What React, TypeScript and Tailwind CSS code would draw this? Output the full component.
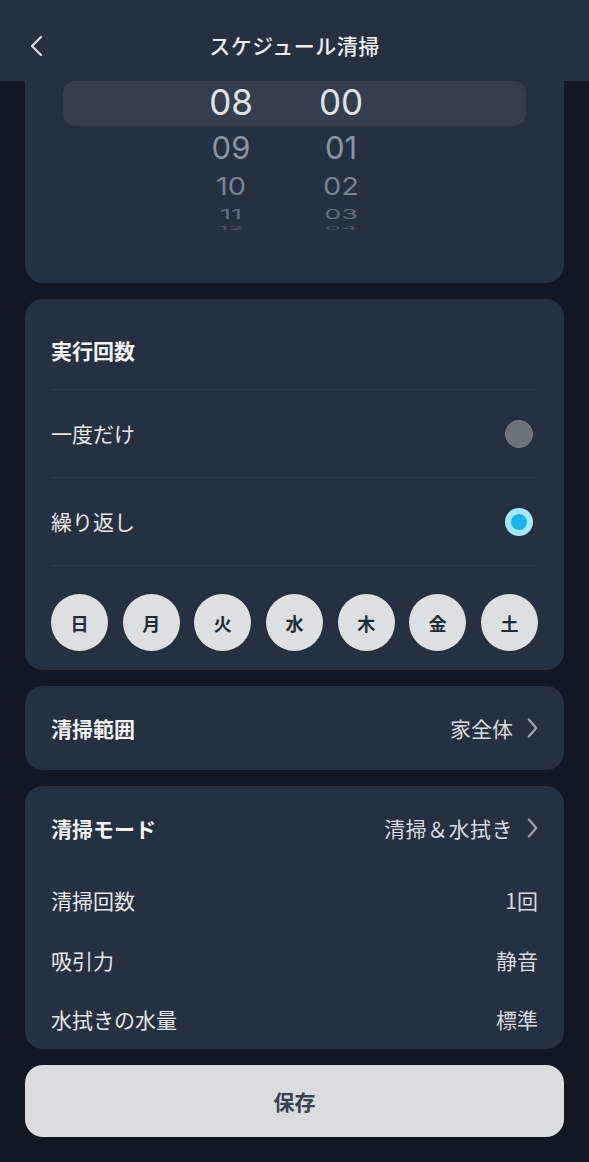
import React from "react";

const Chevron = ({ className = "" }: { className?: string }) => (
  <svg viewBox="0 0 10 19" className={className} fill="none" stroke="currentColor" strokeWidth="2.2" strokeLinecap="round" strokeLinejoin="round">
    <path d="M1.5 1.5 L8.5 9.5 L1.5 17.5" />
  </svg>
);

const days = ["日", "月", "火", "水", "木", "金", "土"];

export default function App() {
  return (
    <div className="w-[589px] min-h-[1162px] bg-[#111824] font-['Noto_Sans_CJK_JP','Noto_Sans',sans-serif] text-[#e3e6ea]">
      {/* Header */}
      <div className="h-[81px] bg-[#253041] grid grid-cols-[72px_1fr_72px] items-center pt-[10px]">
        <div className="flex justify-center">
          <svg viewBox="0 0 14 22" className="w-[14px] h-[22px] text-[#d5d9de]" fill="none" stroke="currentColor" strokeWidth="2.3" strokeLinecap="round" strokeLinejoin="round">
            <path d="M12 2 L3 11 L12 20" />
          </svg>
        </div>
        <div className="text-center text-[21px] font-medium leading-none text-[#eceef1] tracking-[0.5px]">スケジュール清掃</div>
        <div />
      </div>

      <div className="px-[25px] flex flex-col gap-4">
        {/* Time picker card */}
        <div className="h-[202px] bg-[#253041] rounded-b-[18px] px-[38px] font-['Inter',sans-serif]">
          <div className="h-[45px] bg-[#343e4c] rounded-[12px] flex items-center pl-[128px] gap-[30px] pb-[3px]">
            <div className="w-[80px] text-center text-[35px] leading-none text-[#dfe3e8]">08</div>
            <div className="w-[80px] text-center text-[35px] leading-none text-[#dfe3e8]">00</div>
          </div>
          <div className="h-[42px] flex items-center pl-[128px] gap-[30px] text-[31px] leading-none text-[#8a94a1]">
            <div className="w-[80px] text-center">09</div>
            <div className="w-[80px] text-center">01</div>
          </div>
          <div className="h-[36px] flex items-center pl-[128px] gap-[30px] text-[29px] leading-none text-[#7a8490] scale-y-[0.85]">
            <div className="w-[80px] text-center">10</div>
            <div className="w-[80px] text-center">02</div>
          </div>
          <div className="h-[20px] flex items-center pl-[128px] gap-[30px] text-[27px] leading-none text-[#66707c] scale-y-[0.5]">
            <div className="w-[80px] text-center">11</div>
            <div className="w-[80px] text-center">03</div>
          </div>
          <div className="h-[8px] flex items-center pl-[128px] gap-[30px] text-[26px] leading-none text-[#4d5765] scale-y-[0.2]">
            <div className="w-[80px] text-center">12</div>
            <div className="w-[80px] text-center">04</div>
          </div>
        </div>

        {/* 実行回数 */}
        <div className="bg-[#253041] rounded-[18px] px-[26px]">
          <div className="h-[90px] flex items-center pt-[12px] text-[21px] font-bold text-[#f0f2f4] leading-none">実行回数</div>
          <div className="h-px bg-[#323d4c]" />
          <div className="h-[87px] flex items-center justify-between">
            <span className="text-[21px] leading-none">一度だけ</span>
            <div className="w-[28px] h-[28px] rounded-full bg-[#6c727c] border border-[#7a8089] mr-[5px]" />
          </div>
          <div className="h-px bg-[#323d4c]" />
          <div className="h-[87px] flex items-center justify-between">
            <span className="text-[21px] leading-none">繰り返し</span>
            <div className="w-[28px] h-[28px] rounded-full bg-[#a6e9fc] flex items-center justify-center mr-[5px]">
              <div className="w-[16px] h-[16px] rounded-full bg-[#1cb3e9]" />
            </div>
          </div>
          <div className="h-px bg-[#323d4c]" />
          <div className="pt-[28px] pb-[19px] flex justify-between">
            {days.map((d) => (
              <div key={d} className="w-[57px] h-[57px] rounded-full bg-[#dcdfe3] flex items-center justify-center text-[18px] font-bold text-[#222b38] leading-none">
                {d}
              </div>
            ))}
          </div>
        </div>

        {/* 清掃範囲 */}
        <div className="h-[84px] bg-[#253041] rounded-[18px] px-[26px] flex items-center justify-between">
          <span className="text-[21px] font-bold text-[#f0f2f4] leading-none">清掃範囲</span>
          <div className="flex items-center gap-[14px]">
            <span className="text-[21px] leading-none text-[#d6dadf]">家全体</span>
            <Chevron className="w-[11px] h-[20px] text-[#9aa2ad]" />
          </div>
        </div>

        {/* 清掃モード */}
        <div className="bg-[#253041] rounded-[18px] px-[26px]">
          <div className="h-[84px] flex items-center justify-between">
            <span className="text-[21px] font-bold text-[#f0f2f4] leading-none">清掃モード</span>
            <div className="flex items-center gap-[14px]">
              <span className="text-[21px] leading-none text-[#d6dadf] tracking-[0.5px]">清掃＆水拭き</span>
              <Chevron className="w-[11px] h-[20px] text-[#9aa2ad]" />
            </div>
          </div>
          <div className="h-[60px] flex items-center justify-between">
            <span className="text-[21px] leading-none">清掃回数</span>
            <span className="text-[21px] leading-none text-[#d6dadf]">1回</span>
          </div>
          <div className="h-[60px] flex items-center justify-between">
            <span className="text-[21px] leading-none">吸引力</span>
            <span className="text-[21px] leading-none text-[#d6dadf]">静音</span>
          </div>
          <div className="h-[59px] flex items-center justify-between">
            <span className="text-[21px] leading-none">水拭きの水量</span>
            <span className="text-[21px] leading-none text-[#d6dadf]">標準</span>
          </div>
        </div>

        {/* 保存 */}
        <button className="h-[72px] w-full bg-[#d9dde1] rounded-[18px] flex items-center justify-center text-[21px] font-bold text-[#374151] leading-none">
          保存
        </button>
      </div>
    </div>
  );
}
